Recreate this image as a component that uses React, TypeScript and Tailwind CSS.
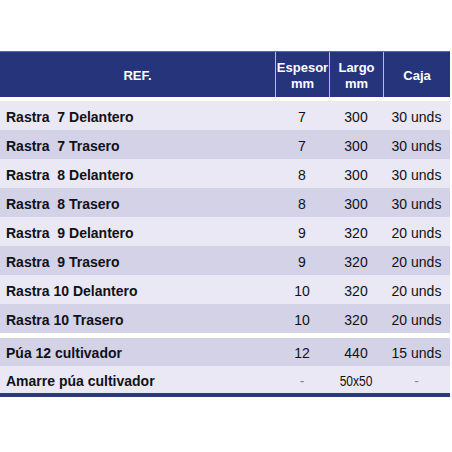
import React from 'react';

type Row = { ref: string; esp: string; largo: string; caja: string };

const mainRows: Row[] = [
  { ref: 'Rastra  7 Delantero', esp: '7', largo: '300', caja: '30 unds' },
  { ref: 'Rastra  7 Trasero', esp: '7', largo: '300', caja: '30 unds' },
  { ref: 'Rastra  8 Delantero', esp: '8', largo: '300', caja: '30 unds' },
  { ref: 'Rastra  8 Trasero', esp: '8', largo: '300', caja: '30 unds' },
  { ref: 'Rastra  9 Delantero', esp: '9', largo: '320', caja: '20 unds' },
  { ref: 'Rastra  9 Trasero', esp: '9', largo: '320', caja: '20 unds' },
  { ref: 'Rastra 10 Delantero', esp: '10', largo: '320', caja: '20 unds' },
  { ref: 'Rastra 10 Trasero', esp: '10', largo: '320', caja: '20 unds' },
];

const cols = 'grid grid-cols-[275px_54px_54px_67px]';

const DataRow = ({ row, dark }: { row: Row; dark: boolean }) => (
  <div className={`${cols} h-[29px] items-center pt-[4px] ${dark ? 'bg-[#d3d2e7]' : 'bg-[#e9e8f4]'}`}>
    <div className="pl-[6px] font-bold whitespace-pre">{row.ref}</div>
    <div className="text-center">{row.esp}</div>
    <div className="text-center">{row.largo}</div>
    <div className="text-center">{row.caja}</div>
  </div>
);

export default function App() {
  return (
    <div className="w-[452px] h-[452px] bg-white pt-[51px] font-['Liberation_Sans',Arial,sans-serif] text-[14px] text-[#111118]">
      <div className="w-[450px]">
        {/* header */}
        <div className={`${cols} h-[46px] bg-[#26347c] border-t border-[#5a66a0] text-white font-bold text-[13px] leading-[16px]`}>
          <div className="flex items-center justify-center pt-[3px]">REF.</div>
          <div className="flex items-center justify-center text-center pt-[2px] border-l border-[#b9bdd6]">
            Espesor
            <br />
            mm
          </div>
          <div className="flex items-center justify-center text-center pt-[2px] border-l border-[#b9bdd6]">
            Largo
            <br />
            mm
          </div>
          <div className="flex items-center justify-center pt-[3px] border-l border-[#b9bdd6]">Caja</div>
        </div>

        <div className="mt-[4px]">
          {mainRows.map((r, i) => (
            <DataRow key={r.ref} row={r} dark={i % 2 === 1} />
          ))}
        </div>

        <div className="mt-[5px]">
          <div className={`${cols} h-[28px] items-center pt-[3px] bg-[#d3d2e7]`}>
            <div className="pl-[6px] font-bold">Púa 12 cultivador</div>
            <div className="text-center">12</div>
            <div className="text-center">440</div>
            <div className="text-center">15 unds</div>
          </div>
          <div className={`${cols} h-[27px] items-center pt-[4px] bg-[#e9e8f4]`}>
            <div className="pl-[6px] font-bold">Amarre púa cultivador</div>
            <div className="text-center text-[#8a8a96]">-</div>
            <div className="text-center">
              <span className="inline-block scale-x-[0.86]">50x50</span>
            </div>
            <div className="text-center text-[#8a8a96]">-</div>
          </div>
          <div className="h-[4px] bg-[#2b3a80]" />
        </div>
      </div>
    </div>
  );
}
